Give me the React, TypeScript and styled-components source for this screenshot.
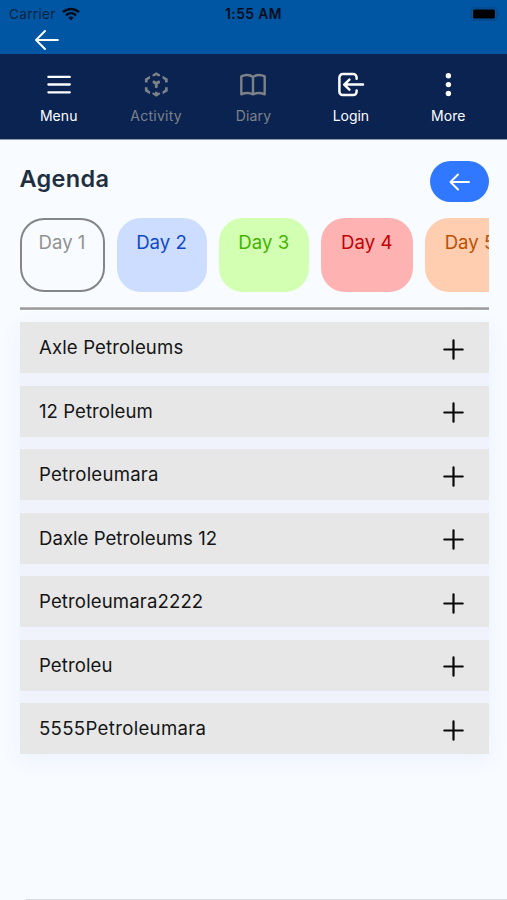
import React from "react";
import styled, { createGlobalStyle } from "styled-components";

const GlobalStyle = createGlobalStyle`
  * { box-sizing: border-box; }
  body { margin: 0; background: #f8fbff; font-family: Inter, "Liberation Sans", sans-serif; }
`;

const Screen = styled.div`
  width: 507px;
  height: 900px;
  display: flex;
  flex-direction: column;
  overflow: hidden;
  background: #f8fbff;
`;

const TopBar = styled.header`
  height: 54px;
  flex: none;
  background: #0056a2;
  color: #020c1a;
`;

const StatusBar = styled.div`
  height: 27px;
  display: grid;
  grid-template-columns: 1fr auto 1fr;
  align-items: center;
  padding: 0 7px 0 9px;
`;

const Carrier = styled.div`
  display: flex;
  align-items: center;
  gap: 6px;
  font-size: 13.5px;
  letter-spacing: 0.35px;
  color: #05233f;
`;

const Clock = styled.div`
  margin-right: 2px;
  font-size: 13.8px;
  font-weight: 600;
  letter-spacing: 0.45px;
`;

const Battery = styled.svg`
  justify-self: end;
`;

const BackLink = styled.a`
  display: flex;
  width: 24px;
  margin: 3px 0 0 35px;
`;

const NavBar = styled.nav`
  height: 86px;
  flex: none;
  display: grid;
  grid-template-columns: repeat(5, 97.4px);
  justify-content: center;
  background: #0a2351;
  border-bottom: 1px solid #8e9bb5;
`;

const NavItem = styled.a<{ $muted?: boolean }>`
  display: flex;
  flex-direction: column;
  align-items: center;
  gap: 8px;
  padding-top: 16px;
  color: ${(p) => (p.$muted ? "#7d8188" : "#ffffff")};
  font-size: 14px;
  line-height: 20px;
`;

const NavLabel = styled.span<{ $track: number }>`
  letter-spacing: ${(p) => p.$track}px;
`;

const Content = styled.main`
  flex: 1;
  display: flex;
  flex-direction: column;
  padding: 21px 18px 0 19.5px;
`;

const Heading = styled.div`
  display: flex;
  justify-content: space-between;
  align-items: flex-start;
`;

const Title = styled.h1`
  margin: 3px 0 0;
  font-size: 23.5px;
  line-height: 30px;
  font-weight: 600;
  letter-spacing: 0.3px;
  color: #1e2f40;
`;

const BackButton = styled.button`
  width: 59px;
  height: 41px;
  padding: 0;
  border: 0;
  border-radius: 21px;
  background: #2f78ff;
  display: flex;
  align-items: center;
  justify-content: center;
`;

const Days = styled.div`
  display: flex;
  gap: 12px;
  height: 74px;
  margin-top: 16px;
  overflow: hidden;
`;

const Day = styled.div<{ $width: number; $bg: string; $fg: string; $outlined?: boolean }>`
  flex: none;
  width: ${(p) => p.$width}px;
  height: 74px;
  padding-top: 12px;
  border-radius: 24px;
  background: ${(p) => p.$bg};
  color: ${(p) => p.$fg};
  box-shadow: ${(p) => (p.$outlined ? "inset 0 0 0 2px #858585" : "none")};
  text-align: center;
  white-space: nowrap;
  font-size: 18.6px;
  line-height: 24px;
`;

const Divider = styled.hr`
  flex: none;
  width: 100%;
  height: 3px;
  margin: 15px 0 12px;
  border: 0;
  background: linear-gradient(#c4c5c7, #999 50%, #b5b6b8);
`;

const Accordion = styled.section`
  display: grid;
  grid-auto-rows: 51.2px;
  row-gap: 12.37px;
  background: #f0f3fc;
  box-shadow: 0 6px 20px rgba(90, 120, 230, 0.07);
`;

const Row = styled.div`
  display: flex;
  align-items: center;
  justify-content: space-between;
  padding: 0 25px 0 19.5px;
  background: #e7e7e7;
  color: #151515;
`;

const RowLabel = styled.span<{ $track: number }>`
  margin-bottom: 1px;
  font-size: 18.6px;
  line-height: 24px;
  letter-spacing: ${(p) => p.$track}px;
`;

const PlusIcon = styled.svg`
  margin-top: 3px;
`;

const BottomEdge = styled.footer`
  height: 1px;
  flex: none;
  margin-left: 26px;
  background: #d8dbe0;
`;

const days = [
  { label: "Day 1", width: 85, bg: "transparent", fg: "#929292", outlined: true },
  { label: "Day 2", width: 90, bg: "#ccddff", fg: "#0f49c8" },
  { label: "Day 3", width: 90.5, bg: "#d2ffb2", fg: "#45b400" },
  { label: "Day 4", width: 91.5, bg: "#ffb2b2", fg: "#c40000" },
  { label: "Day 5", width: 91, bg: "#ffcdb0", fg: "#bd5100" },
];

const rows = [
  { label: "Axle Petroleums", track: 0.12 },
  { label: "12 Petroleum", track: 0.04 },
  { label: "Petroleumara", track: 0.22 },
  { label: "Daxle Petroleums 12", track: 0.02 },
  { label: "Petroleumara2222", track: 0.12 },
  { label: "Petroleu", track: 0.08 },
  { label: "5555Petroleumara", track: 0.32 },
];

const Icon = ({ children }: { children: React.ReactNode }) => (
  <svg width="28" height="28" viewBox="0 0 28 28" fill="none" stroke="currentColor" strokeWidth="2.3" strokeLinecap="round" strokeLinejoin="round">
    {children}
  </svg>
);

const navItems = [
  {
    label: "Menu",
    track: 0.05,
    icon: <path d="M3.4 6.9h21.400M3.400 14.500h21.400M3.400 22.300h21.400" />,
  },
  {
    label: "Activity",
    muted: true,
    track: 0.25,
    icon: (
      <g fill="currentColor" stroke="none">
        <path d="M10.500 4.400 14.300 2.200l3.800 2.200v1.900h-1.700l-2.100-1.100-2.100 1.100h-1.700Z" />
        <path d="M8 5.800v3L5.600 10v2.400H2.900V8.700Z" />
        <path d="M20.600 5.800v3L23 10v2.400h2.700V8.700Z" />
        <path d="M2.900 17.200h2.700v2.500L8 21.200v3l-5.100-3Z" />
        <path d="M25.700 17.200H23v2.500l-2.400 1.500v3l5.100-3Z" />
        <path d="M10.500 24.200v-1.700l2.500.6v-1.400h2.600v1.400l2.500-.6v1.700l-3.800 2.600Z" />
        <path d="M10.600 11.300l1.300-1.100 2.400 1.500 2.400-1.500 1.300 1.100v1.600l-2.300 1.500v3l-1.400.9-1.400-.9v-3l-2.300-1.500Z" />
      </g>
    ),
  },
  {
    label: "Diary",
    muted: true,
    track: 0.2,
    icon: (
      <path
        strokeWidth="2.400"
        d="M14 7C12 5.200 10 5 8 5 5.600 5 3.800 5.600 2.300 6.400V24.300c3.900-1.600 8.500-1.600 11.700.1 3.200-1.700 7.800-1.700 11.700-.1V6.400C24.200 5.600 22.400 5 20 5c-2 0-4 .2-6 2Zm0 0v17.400"
      />
    ),
  },
  {
    label: "Login",
    track: -0.02,
    icon: (
      <path
        strokeWidth="2.500"
        d="M19.600 8.800V7.400a3.300 3.300 0 0 0-3.300-3.300H5.700A3.300 3.300 0 0 0 2.400 7.400v14.400a3.300 3.300 0 0 0 3.300 3.300h10.600a3.300 3.300 0 0 0 3.300-3.300v-1.400M26 14.600H7.500M12.400 9.600 7.200 14.600l5.200 5"
      />
    ),
  },
  {
    label: "More",
    track: 0.1,
    icon: (
      <g fill="currentColor" stroke="none">
        <circle cx="14.400" cy="5.700" r="2.700" />
        <circle cx="14.400" cy="14.600" r="2.700" />
        <circle cx="14.400" cy="23.500" r="2.700" />
      </g>
    ),
  },
];

export default function App() {
  return (
    <Screen>
      <GlobalStyle />
      <TopBar>
        <StatusBar>
          <Carrier>
            Carrier
            <svg width="18" height="14" viewBox="0 0 18 14" fill="none" stroke="#020c1a" strokeWidth="2.500">
              <path d="M1 5.100C5.500.8 12.500.8 17 5.100M4 8.300c2.900-2.700 7.100-2.700 10 0" />
              <path d="M6.300 10.600c1.500-1.400 3.900-1.400 5.400 0L9 13.400Z" fill="#020c1a" stroke="none" />
            </svg>
          </Carrier>
          <Clock>1:55 AM</Clock>
          <Battery width="30" height="14" viewBox="0 0 30 14">
            <rect x="1" y="1" width="26" height="12" rx="3.500" fill="none" stroke="#074a8b" strokeWidth="1.300" />
            <rect x="3" y="2.500" width="22" height="9" rx="1.500" fill="#000" />
            <path d="M28.300 5v4c1.300-.6 1.300-3.400 0-4Z" fill="#074a8b" />
          </Battery>
        </StatusBar>
        <BackLink>
          <svg width="24" height="20" viewBox="0 0 24 20" fill="none" stroke="#fff" strokeWidth="1.900" strokeLinecap="round" strokeLinejoin="round">
            <path d="M23 10H1M10 1 1 10l9 9" />
          </svg>
        </BackLink>
      </TopBar>
      <NavBar>
        {navItems.map((n) => (
          <NavItem key={n.label} $muted={n.muted}>
            <Icon>{n.icon}</Icon>
            <NavLabel $track={n.track}>{n.label}</NavLabel>
          </NavItem>
        ))}
      </NavBar>
      <Content>
        <Heading>
          <Title>Agenda</Title>
          <BackButton aria-label="Back">
            <svg width="21" height="18" viewBox="0 0 21 18" fill="none" stroke="#fff" strokeWidth="1.900" strokeLinecap="round" strokeLinejoin="round">
              <path d="M20 9H1.500M9 1.500 1.500 9 9 16.500" />
            </svg>
          </BackButton>
        </Heading>
        <Days>
          {days.map((d) => (
            <Day key={d.label} $width={d.width} $bg={d.bg} $fg={d.fg} $outlined={d.outlined}>
              {d.label}
            </Day>
          ))}
        </Days>
        <Divider />
        <Accordion>
          {rows.map((r) => (
            <Row key={r.label}>
              <RowLabel $track={r.track}>{r.label}</RowLabel>
              <PlusIcon width="21" height="21" viewBox="0 0 21 21" stroke="#080808" strokeWidth="2.200" strokeLinecap="round">
                <path d="M10.500 1.300v18.400M1.300 10.500h18.400" />
              </PlusIcon>
            </Row>
          ))}
        </Accordion>
      </Content>
      <BottomEdge />
    </Screen>
  );
}
